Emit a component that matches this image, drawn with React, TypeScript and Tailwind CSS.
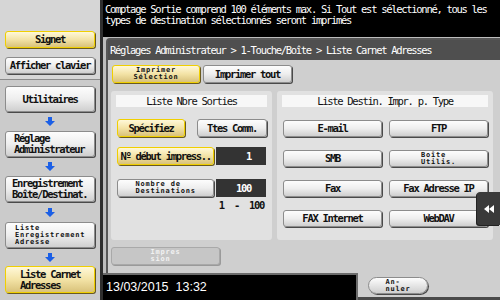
import React from 'react';

const mono = "font-['DejaVu_Sans_Mono',monospace]";
const txt = 'text-[10.5px] tracking-[-1.3px] leading-[11px]';
const tiny = 'text-[7px] tracking-[0.8px] leading-[7px]';

const greyBtn =
  'bg-linear-to-b from-[#fdfdfd] via-[#eeeeee] to-[#cfcfcf] border border-[#8c8c8c] rounded-[3px] shadow-[1px_1px_0_#4a4a4a] text-[#111]';
const yellowBtn =
  'bg-linear-to-b from-[#fff8d8] via-[#f3e3a6] to-[#d9c27a] border-[1.5px] border-[#f0cf00] rounded-[3px] shadow-[1px_1px_0_#6a5a20] text-[#111]';

type BtnProps = {
  children: React.ReactNode;
  className?: string;
  yellow?: boolean;
};

const Btn: React.FC<BtnProps> = ({ children, className = '', yellow }) => (
  <div className={`${yellow ? yellowBtn : greyBtn} flex items-center justify-center font-bold ${className}`}>
    {children}
  </div>
);

const Arrow = () => (
  <div className="flex h-full items-center justify-center">
    <svg width="10" height="9" viewBox="0 0 10 9">
      <polygon points="3,0 7,0 7,4 10,4 5,9 0,4 3,4" fill="#1b5fe6" />
    </svg>
  </div>
);

const Sidebar = () => (
  <div className={`flex w-[100px] flex-col ${mono}`}>
    <div className="flex h-[80px] flex-col gap-[9px] border-b border-[#8a8a8a] bg-[#d6d6d6] px-[5px] pt-[31px]">
      <Btn yellow className={`h-[17px] ${txt}`}>Signet</Btn>
      <Btn className={`h-[17px] ${txt}`}>Afficher clavier</Btn>
    </div>
    <div className="flex flex-1 flex-col bg-[#cbcbcb] px-[5px] pt-[6px]">
      <Btn className={`h-[26px] ${txt}`}>Utilitaires</Btn>
      <div className="h-[19px]"><Arrow /></div>
      <Btn className={`h-[26px] ${txt} !justify-start pl-[8px] text-left`}>
        <span>Réglage<br />Administrateur</span>
      </Btn>
      <div className="h-[19px]"><Arrow /></div>
      <Btn className={`h-[26px] ${txt} !justify-start pl-[6px] text-left`}>
        <span>Enregistrement<br />Boîte/Destinat.</span>
      </Btn>
      <div className="h-[20px]"><Arrow /></div>
      <Btn className={`h-[26px] ${tiny} !justify-start pl-[9px] text-left`}>
        <span>Liste<br />Enregistrement<br />Adresse</span>
      </Btn>
      <div className="h-[18px]"><Arrow /></div>
      <Btn yellow className={`h-[27px] ${txt} !justify-start pl-[14px] text-left`}>
        <span>Liste Carnet<br />Adresses</span>
      </Btn>
    </div>
  </div>
);

const Title: React.FC<{ children: React.ReactNode }> = ({ children }) => (
  <div className={`mx-[5px] mt-[4px] flex h-[12px] items-center justify-center bg-[#f7f7f7] ${txt} text-[#111]`}>
    {children}
  </div>
);

const Value: React.FC<{ children: React.ReactNode }> = ({ children }) => (
  <div className={`flex h-[18px] w-[50px] items-center justify-end bg-[#333333] pr-[15px] font-bold text-white ${txt}`}>
    {children}
  </div>
);

const destinations: [string, string][] = [
  ['E-mail', 'FTP'],
  ['SMB', 'Boîte Utilis.'],
  ['Fax', 'Fax Adresse IP'],
  ['FAX Internet', 'WebDAV'],
];

const Panel = () => (
  <div className="ml-[3px] mt-[1px] flex h-[235px] flex-col rounded-tl-[4px] border-l-2 border-t-2 border-[#575757] bg-[#cfcfcf]">
    <div className={`flex h-[20px] items-center bg-[#4f4f4f] pl-[2px] text-white ${mono} ${txt}`}>
      Réglages Administrateur &gt; 1-Touche/Boîte &gt; Liste Carnet Adresses
    </div>
    <div className={`flex flex-col pl-[3px] pt-[5px] ${mono}`}>
      <div className="flex gap-[3px] pl-[1px]">
        <Btn yellow className={`h-[18px] w-[88px] ${tiny}`}>
          <span className="text-center">Imprimer<br />Sélection</span>
        </Btn>
        <Btn className={`h-[18px] w-[89px] ${txt}`}>Imprimer tout</Btn>
      </div>
      <div className="mt-[8px] flex gap-[5px]">
        <div className="flex h-[149px] w-[161px] flex-col rounded-[3px] bg-[#e1e1e1]">
          <Title>Liste Nbre Sorties</Title>
          <div className="mt-[12px] flex justify-between px-[6px] pr-[5px]">
            <Btn yellow className={`h-[18px] w-[68px] ${txt}`}>Spécifiez</Btn>
            <Btn className={`h-[18px] w-[70px] ${txt}`}>Ttes Comm.</Btn>
          </div>
          <div className="mt-[10px] flex gap-[2px] px-[6px]">
            <Btn yellow className={`h-[18px] w-[98px] ${txt}`}>Nº début impress..</Btn>
            <Value>1</Value>
          </div>
          <div className="mt-[14px] flex gap-[2px] px-[6px]">
            <Btn className={`h-[18px] w-[98px] ${tiny}`}>
              <span className="text-left">Nombre de<br />Destinations</span>
            </Btn>
            <Value>100</Value>
          </div>
          <div className={`mt-[3px] flex justify-end gap-[10px] pr-[8px] font-bold text-[#111] ${txt}`}>
            <span>1</span>
            <span>-</span>
            <span>100</span>
          </div>
        </div>
        <div className="flex h-[149px] w-[216px] flex-col rounded-[3px] bg-[#e1e1e1]">
          <Title>Liste Destin. Impr. p. Type</Title>
          <div className="mt-[13px] flex flex-col gap-[13px] pl-[6px]">
            {destinations.map(([a, b]) => (
              <div key={a} className="flex gap-[7px]">
                <Btn className={`h-[17px] w-[99px] ${txt}`}>{a}</Btn>
                {b === 'Boîte Utilis.' ? (
                  <Btn className={`h-[17px] w-[99px] ${tiny}`}>
                    <span className="text-left">Boîte<br />Utilis.</span>
                  </Btn>
                ) : (
                  <Btn className={`h-[17px] w-[99px] ${txt}`}>{b}</Btn>
                )}
              </div>
            ))}
          </div>
        </div>
      </div>
      <div className={`mt-[7px] flex h-[18px] w-[109px] items-center justify-center rounded-[3px] border border-[#a9a9a9] bg-[#c6c6c6] font-bold text-[#f2f2f2] shadow-[1px_1px_0_#9a9a9a] ${tiny}`}>
        <span className="text-left">Impres<br />sion</span>
      </div>
    </div>
  </div>
);

const Footer = () => (
  <div className="flex h-[27px]">
    <div className="flex w-[255px] items-center border-r-2 border-t-2 border-[#6b6b6b] bg-black pl-[3px]">
      <span className="whitespace-pre font-['Liberation_Sans',sans-serif] text-[12.5px] text-white">13/03/2015  13:32</span>
    </div>
    <div className="flex flex-1 border-b-[3px] border-[#4a4a4a] bg-[#cfcfcf] pl-[10px] pt-[4px]">
      <div className={`flex h-[17px] w-[60px] items-center justify-center rounded-full border border-[#8c8c8c] bg-linear-to-b from-[#fdfdfd] to-[#cfcfcf] font-bold text-[#111] shadow-[1px_1px_0_#4a4a4a] ${mono} ${tiny}`}>
        <span className="text-left">An-<br />nuler</span>
      </div>
    </div>
  </div>
);

export default function App() {
  return (
    <div className="relative flex h-[300px] w-[500px] overflow-hidden bg-black">
      <Sidebar />
      <div className="w-[3px] bg-[#2e2e2e]" />
      <div className="flex flex-1 flex-col">
        <div className={`h-[37px] bg-black px-[2px] pt-[4px] text-white ${mono} ${txt}`}>
          Comptage Sortie comprend 100 éléments max. Si Tout est sélectionné, tous les
          <br />
          types de destination sélectionnés seront imprimés
        </div>
        <div className="flex flex-1 flex-col bg-[#bdbdbd]">
          <Panel />
          <Footer />
        </div>
      </div>
      <div className="absolute left-[477px] top-[192px] flex h-[33px] w-[23px] items-center justify-center rounded-l-[3px] bg-[#3a3a3a] shadow-[-1px_1px_0_#222]">
        <svg width="12" height="8" viewBox="0 0 12 8">
          <polygon points="6,0 6,8 1,4" fill="#fff" />
          <polygon points="11,0 11,8 6,4" fill="#fff" />
        </svg>
      </div>
    </div>
  );
}
